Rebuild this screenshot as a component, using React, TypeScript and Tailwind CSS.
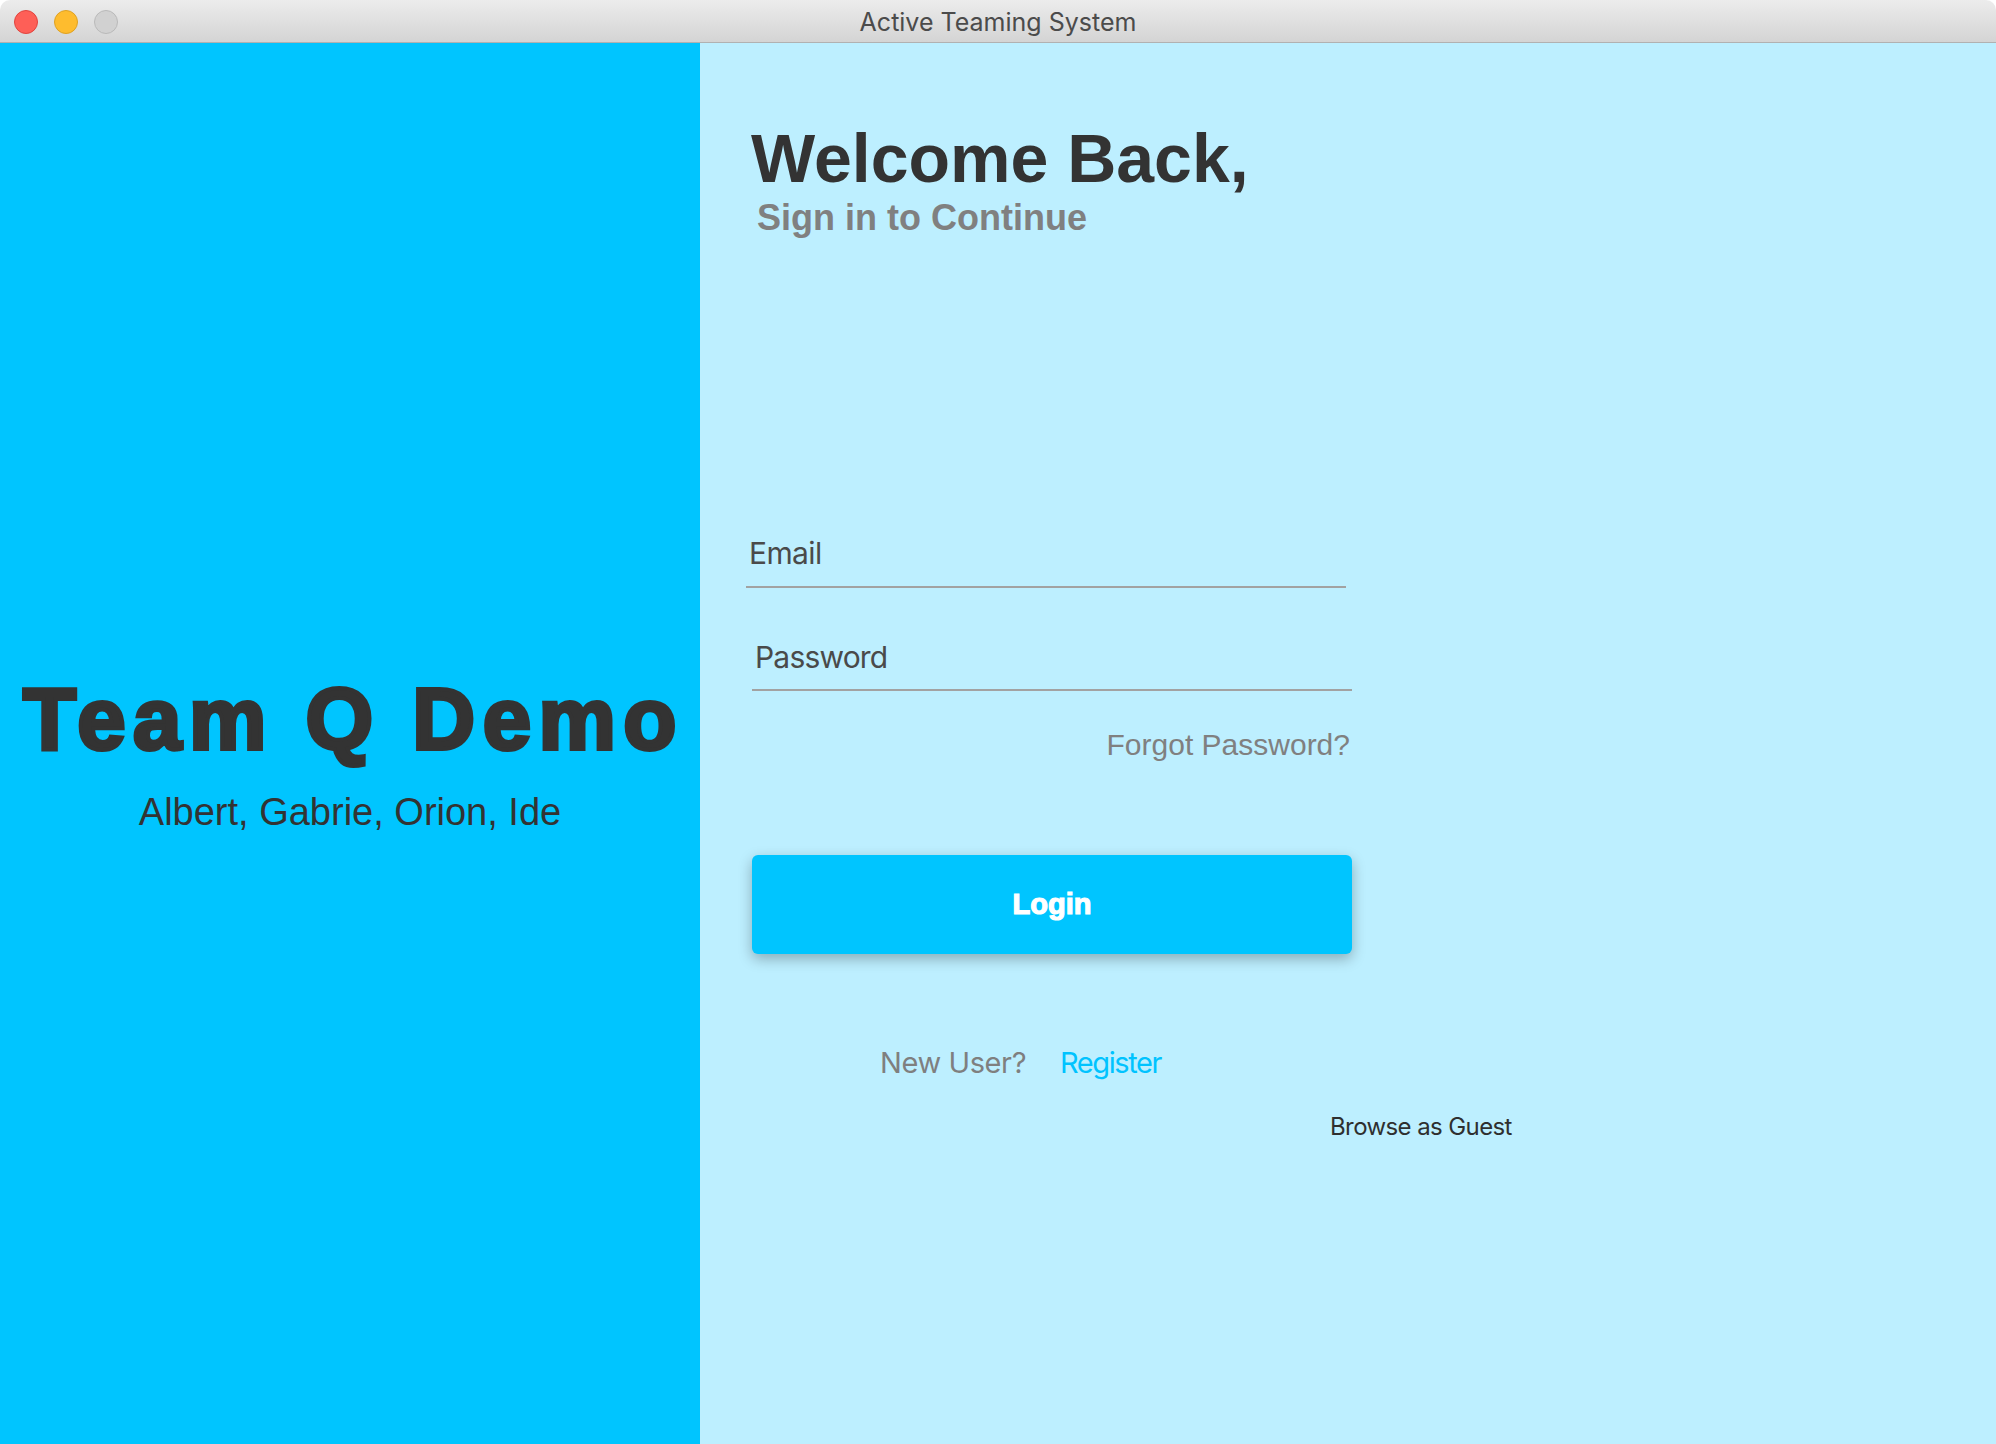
export default function App() {
  return (
    <div className="w-[1996px] h-[1444px] bg-white overflow-hidden">
      <div className="flex flex-col h-full rounded-t-[10px] overflow-hidden">
        {/* Title bar */}
        <div className="relative h-[43px] shrink-0 flex items-center justify-center bg-gradient-to-b from-[#ececec] to-[#d4d4d4] border-b border-[#b1b1b1]">
          <div className="absolute left-[14px] top-[10px] flex gap-4">
            <span className="w-6 h-6 rounded-full bg-[#fe5f57] border border-[#e0443e]" />
            <span className="w-6 h-6 rounded-full bg-[#febc2e] border border-[#dea123]" />
            <span className="w-6 h-6 rounded-full bg-[#d1d1d1] border border-[#b9b9b9]" />
          </div>
          <p className="font-['Inter',sans-serif] text-[25px] leading-none text-[#4b4b4b] pt-[2px]">
            Active Teaming System
          </p>
        </div>

        <div className="flex flex-1 min-h-0">
          {/* Left panel */}
          <div className="w-[700px] shrink-0 bg-[#00c5ff] flex flex-col items-center pt-[632px] font-['Liberation_Sans',Arial,sans-serif] text-[#333333]">
            <h1 className="text-[87px] leading-none font-bold tracking-[7.5px] pl-[7px] [-webkit-text-stroke:4px_#333333]">
              Team Q Demo
            </h1>
            <p className="mt-[31px] text-[38px] leading-none">Albert, Gabrie, Orion, Ide</p>
          </div>

          {/* Right panel */}
          <div className="flex-1 bg-[#bdefff] pl-[46px] pt-[81px] flex flex-col items-start">
            <h2 className="ml-[5px] font-['Liberation_Sans',Arial,sans-serif] font-bold text-[68px] leading-none text-[#333333]">
              Welcome Back,
            </h2>
            <p className="ml-[11px] mt-[8px] font-['Liberation_Sans',Arial,sans-serif] font-bold text-[36px] leading-none text-[#808080]">
              Sign in to Continue
            </p>

            {/* Email */}
            <div className="mt-[302px] w-[600px] border-b-2 border-[#a2a2a2] pb-[18px] pl-[3px]">
              <p className="font-['Inter',sans-serif] text-[30px] leading-none tracking-[-0.6px] text-[#4a4a4a]">Email</p>
            </div>

            {/* Password */}
            <div className="ml-[6px] mt-[54px] w-[600px] border-b-2 border-[#a2a2a2] pb-[17px] pl-[3px]">
              <p className="font-['Inter',sans-serif] text-[30px] leading-none tracking-[-0.8px] text-[#4a4a4a]">Password</p>
            </div>

            <div className="ml-[6px] mt-[39px] w-[600px] text-right pr-[2px]">
              <span className="font-['Liberation_Sans',Arial,sans-serif] text-[30px] leading-none text-[#808080]">
                Forgot Password?
              </span>
            </div>

            <button className="ml-[6px] mt-[94px] w-[600px] h-[99px] rounded-[6px] bg-[#00c5ff] shadow-[0_5px_14px_rgba(0,0,0,0.28)] flex items-center justify-center">
              <span className="font-['Liberation_Sans',Arial,sans-serif] font-bold text-[29px] leading-none text-white [-webkit-text-stroke:1.2px_#ffffff]">
                Login
              </span>
            </button>

            <div className="ml-[134px] mt-[94px] flex items-center font-['Inter',sans-serif] text-[29px] leading-none">
              <span className="w-[180px] text-[#7f7f7f] tracking-[-0.4px]">New User?</span>
              <span className="text-[#00c3ff] tracking-[-1.4px]">Register</span>
            </div>

            <p className="ml-[584px] mt-[38px] font-['Inter',sans-serif] text-[24px] leading-none tracking-[-0.6px] text-[#2f2f2f]">
              Browse as Guest
            </p>
          </div>
        </div>
      </div>
    </div>
  )
}
